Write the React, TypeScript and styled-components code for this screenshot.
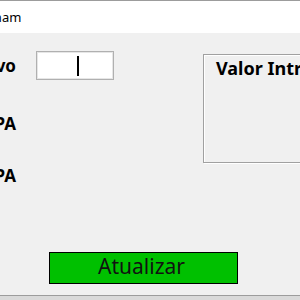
import React from "react";
import styled, { createGlobalStyle } from "styled-components";

const GlobalStyle = createGlobalStyle`
  html, body {
    margin: 0;
    padding: 0;
    background: #d9d9d9;
  }
  #root {
    width: 300px;
    height: 300px;
  }
`;

const Desktop = styled.div`
  position: relative;
  width: 300px;
  height: 300px;
  overflow: hidden;
  background: #d9d9d9;
  font-family: "Noto Sans", "Open Sans", sans-serif;
  color: #000;
`;

// the window is partly off screen to the left
const Window = styled.div`
  position: absolute;
  left: -61px;
  top: 0;
  width: 430px;
  height: 296px;
  box-sizing: border-box;
  border: 1px solid #9c9c9c;
  background: #f0f0f0;
  display: flex;
  flex-direction: column;
`;

const TitleBar = styled.div`
  height: 32px;
  background: #fff;
  display: flex;
  align-items: center;
  padding-left: 32px;
  font-size: 13px;
  padding-bottom: 1px;
  box-sizing: border-box;
`;

const Body = styled.div`
  flex: 1;
  padding-top: 18px;
  display: flex;
  flex-direction: column;
`;

const TopArea = styled.div`
  display: flex;
  align-items: flex-start;
`;

const Form = styled.div`
  display: grid;
  grid-template-columns: 70px 78px;
  grid-template-rows: 29px 58px 52px;
  column-gap: 20px;
  align-items: end;
  padding-left: 6px;
`;

const Label = styled.div`
  height: 29px;
  display: flex;
  align-items: center;
  justify-content: flex-end;
  white-space: nowrap;
  font-size: 17px;
  font-weight: 700;
`;

const Entry = styled.div`
  height: 29px;
  box-sizing: border-box;
  background: #fff;
  border: 1px solid #b0b0b0;
  box-shadow: inset 0 0 0 1px #e6e6e6;
  display: flex;
  align-items: center;
  justify-content: center;
`;

const Caret = styled.span`
  display: block;
  width: 2px;
  height: 20px;
  margin-left: 6px;
  background: #000;
`;

const GroupBox = styled.div`
  margin-left: 89px;
  margin-top: 3px;
  width: 160px;
  height: 109px;
  box-sizing: border-box;
  border: 1px solid #a0a0a0;
  box-shadow: inset 1px 1px 0 #fff, 1px 1px 0 #fff;
  padding: 1px 0 0 12px;
`;

const GroupTitle = styled.div`
  font-size: 18px;
  font-weight: 700;
  white-space: nowrap;
`;

const UpdateButton = styled.button`
  margin: 62px 0 0 109px;
  width: 189px;
  height: 32px;
  box-sizing: border-box;
  border: 1px solid #000;
  background: #00c000;
  color: #111;
  font-family: "Noto Sans", "Open Sans", sans-serif;
  font-size: 21px;
  padding: 0 4px 4px 0;
  display: flex;
  align-items: center;
  justify-content: center;
  cursor: pointer;
`;

export default function App() {
  return (
    <Desktop>
      <GlobalStyle />
      <Window>
        <TitleBar>Graham</TitleBar>
        <Body>
          <TopArea>
            <Form>
              <Label>Preço Ativo</Label>
              <Entry role="textbox">
                <Caret />
              </Entry>
              <Label>VPA</Label>
              <span />
              <Label>LPA</Label>
              <span />
            </Form>
            <GroupBox>
              <GroupTitle>Valor Intrínseco</GroupTitle>
            </GroupBox>
          </TopArea>
          <UpdateButton>Atualizar</UpdateButton>
        </Body>
      </Window>
    </Desktop>
  );
}
